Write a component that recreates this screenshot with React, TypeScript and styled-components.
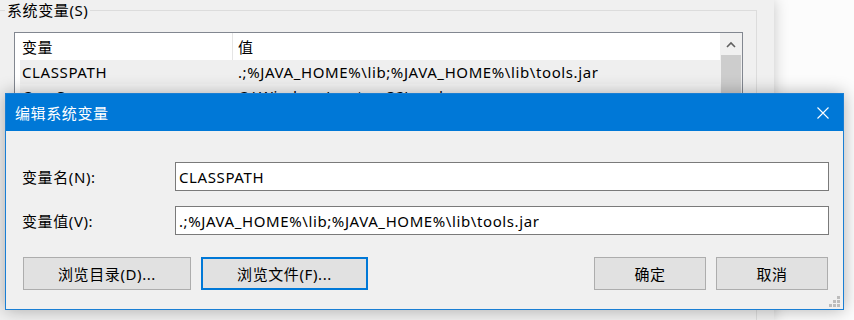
import React from 'react'
import styled, { createGlobalStyle } from 'styled-components'

const GlobalStyle = createGlobalStyle`
  html, body {
    margin: 0;
    padding: 0;
    background: #ffffff;
  }
  body {
    font-family: "Noto Sans", "Noto Sans CJK SC", sans-serif;
    font-size: 15px;
    letter-spacing: 0.6px;
    color: #000000;
  }
`

const Screen = styled.div`
  position: relative;
  width: 854px;
  height: 320px;
  overflow: hidden;
  background: #fcfcfc;
`

const ParentWindow = styled.div`
  width: 774px;
  height: 320px;
  background: #f0f0f0;
  box-shadow: 0 0 14px rgba(0, 0, 0, 0.22);
  overflow: hidden;
`

const GroupBox = styled.fieldset`
  margin: 0 0 0 -4px;
  padding: 0;
  width: 761px;
  height: 330px;
  box-sizing: border-box;
  border: 1px solid #dcdcdc;
`

const GroupTitle = styled.legend`
  margin-left: 8px;
  padding: 0 2px;
  line-height: 20px;
  font-size: 15px;
`

const ListBox = styled.div`
  display: flex;
  margin: 12px 0 0 17px;
  width: 729px;
  height: 200px;
  box-sizing: border-box;
  border: 1px solid #828790;
  background: #ffffff;
`

const ListContent = styled.div`
  flex: 1;
  display: flex;
  flex-direction: column;
`

const HeaderRow = styled.div`
  display: flex;
  height: 27px;
  background: #ffffff;
`

const HeaderCell = styled.div<{ $width?: number }>`
  display: flex;
  align-items: center;
  box-sizing: border-box;
  ${p => (p.$width ? `width: ${p.$width}px;` : 'flex: 1;')}
  padding-left: ${p => (p.$width ? 7 : 5)}px;
  border-right: ${p => (p.$width ? '1px solid #e5e5e5' : 'none')};
  line-height: 20px;
`

const Row = styled.div<{ $shade: string }>`
  display: flex;
  align-items: center;
  height: 24px;
  margin-left: 5px;
  background: ${p => p.$shade};
  line-height: 20px;
`

const NameCell = styled.div`
  width: 218px;
  padding-left: 2px;
  box-sizing: border-box;
`

const ValueCell = styled.div`
  flex: 1;
  white-space: nowrap;
`

const ScrollBar = styled.div`
  display: flex;
  flex-direction: column;
  width: 22px;
  background: #f0f0f0;
`

const ScrollArrow = styled.div`
  display: flex;
  align-items: center;
  justify-content: center;
  height: 22px;
`

const ScrollThumb = styled.div`
  margin: 0 1px;
  height: 150px;
  background: #cdcdcd;
`

const Dialog = styled.div`
  position: absolute;
  left: 5px;
  top: 93px;
  width: 839px;
  height: 217px;
  box-sizing: border-box;
  display: flex;
  flex-direction: column;
  border: 1px solid #1a7fd4;
  background: #f0f0f0;
  box-shadow: 0 0 16px rgba(0, 0, 0, 0.3);
`

const TitleBar = styled.div`
  display: flex;
  align-items: center;
  justify-content: space-between;
  height: 37px;
  padding-left: 9px;
  background: #0078d7;
  color: #ffffff;
  line-height: 20px;
`

const CloseButton = styled.div`
  display: flex;
  align-items: center;
  justify-content: center;
  width: 40px;
  height: 37px;
`

const Body = styled.div`
  flex: 1;
  display: flex;
  flex-direction: column;
  padding: 31px 14px 0 16px;
  gap: 15px;
`

const FieldRow = styled.div`
  display: flex;
  align-items: center;
`

const FieldLabel = styled.label`
  width: 153px;
  line-height: 20px;
`

const TextBox = styled.div`
  flex: 1;
  display: flex;
  align-items: center;
  height: 29px;
  box-sizing: border-box;
  padding-left: 3px;
  border: 1px solid #7a7a7a;
  background: #ffffff;
  line-height: 20px;
  white-space: nowrap;
`

const ButtonRow = styled.div`
  display: flex;
  gap: 10px;
  margin-top: 7px;
  padding: 0 1px;
`

const Spacer = styled.div`
  flex: 1;
`

const Button = styled.button<{ $width: number; $focused?: boolean }>`
  width: ${p => p.$width}px;
  height: 33px;
  box-sizing: border-box;
  padding: 0;
  font-family: inherit;
  font-size: 15px;
  letter-spacing: inherit;
  color: #000000;
  background: #e1e1e1;
  border: ${p => (p.$focused ? '2px solid #0078d7' : '1px solid #adadad')};
  line-height: 20px;
`

const Grip = styled.svg`
  position: absolute;
  right: 3px;
  bottom: 2px;
`

const rows = [
  { name: 'CLASSPATH', value: '.;%JAVA_HOME%\\lib;%JAVA_HOME%\\lib\\tools.jar', shade: '#efefef' },
  { name: 'ComSpec', value: 'C:\\Windows\\system32\\cmd.exe', shade: '#f4f4f4' },
]

const App = () => (
  <Screen>
    <GlobalStyle />
    <ParentWindow>
      <GroupBox>
        <GroupTitle>系统变量(S)</GroupTitle>
        <ListBox>
          <ListContent>
            <HeaderRow>
              <HeaderCell $width={218}>变量</HeaderCell>
              <HeaderCell>值</HeaderCell>
            </HeaderRow>
            {rows.map(r => (
              <Row key={r.name} $shade={r.shade}>
                <NameCell>{r.name}</NameCell>
                <ValueCell>{r.value}</ValueCell>
              </Row>
            ))}
          </ListContent>
          <ScrollBar>
            <ScrollArrow>
              <svg width="10" height="7" viewBox="0 0 10 7">
                <path d="M1 6 L5 2 L9 6" fill="none" stroke="#606060" strokeWidth="1.6" />
              </svg>
            </ScrollArrow>
            <ScrollThumb />
          </ScrollBar>
        </ListBox>
      </GroupBox>
    </ParentWindow>

    <Dialog>
      <TitleBar>
        <span>编辑系统变量</span>
        <CloseButton>
          <svg width="12" height="12" viewBox="0 0 12 12">
            <path d="M0.5 0.5 L11.5 11.5 M11.5 0.5 L0.5 11.5" stroke="#ffffff" strokeWidth="1.1" />
          </svg>
        </CloseButton>
      </TitleBar>
      <Body>
        <FieldRow>
          <FieldLabel>变量名(N):</FieldLabel>
          <TextBox>CLASSPATH</TextBox>
        </FieldRow>
        <FieldRow>
          <FieldLabel>变量值(V):</FieldLabel>
          <TextBox>.;%JAVA_HOME%\lib;%JAVA_HOME%\lib\tools.jar</TextBox>
        </FieldRow>
        <ButtonRow>
          <Button $width={168}>浏览目录(D)...</Button>
          <Button $width={167} $focused>浏览文件(F)...</Button>
          <Spacer />
          <Button $width={112}>确定</Button>
          <Button $width={112}>取消</Button>
        </ButtonRow>
      </Body>
      <Grip width="11" height="11" viewBox="0 0 11 11">
        <rect x="8" y="0" width="3" height="3" fill="#bcbcbc" />
        <rect x="4" y="4" width="3" height="3" fill="#bcbcbc" />
        <rect x="8" y="4" width="3" height="3" fill="#bcbcbc" />
        <rect x="0" y="8" width="3" height="3" fill="#bcbcbc" />
        <rect x="4" y="8" width="3" height="3" fill="#bcbcbc" />
        <rect x="8" y="8" width="3" height="3" fill="#bcbcbc" />
      </Grip>
    </Dialog>
  </Screen>
)

export default App
